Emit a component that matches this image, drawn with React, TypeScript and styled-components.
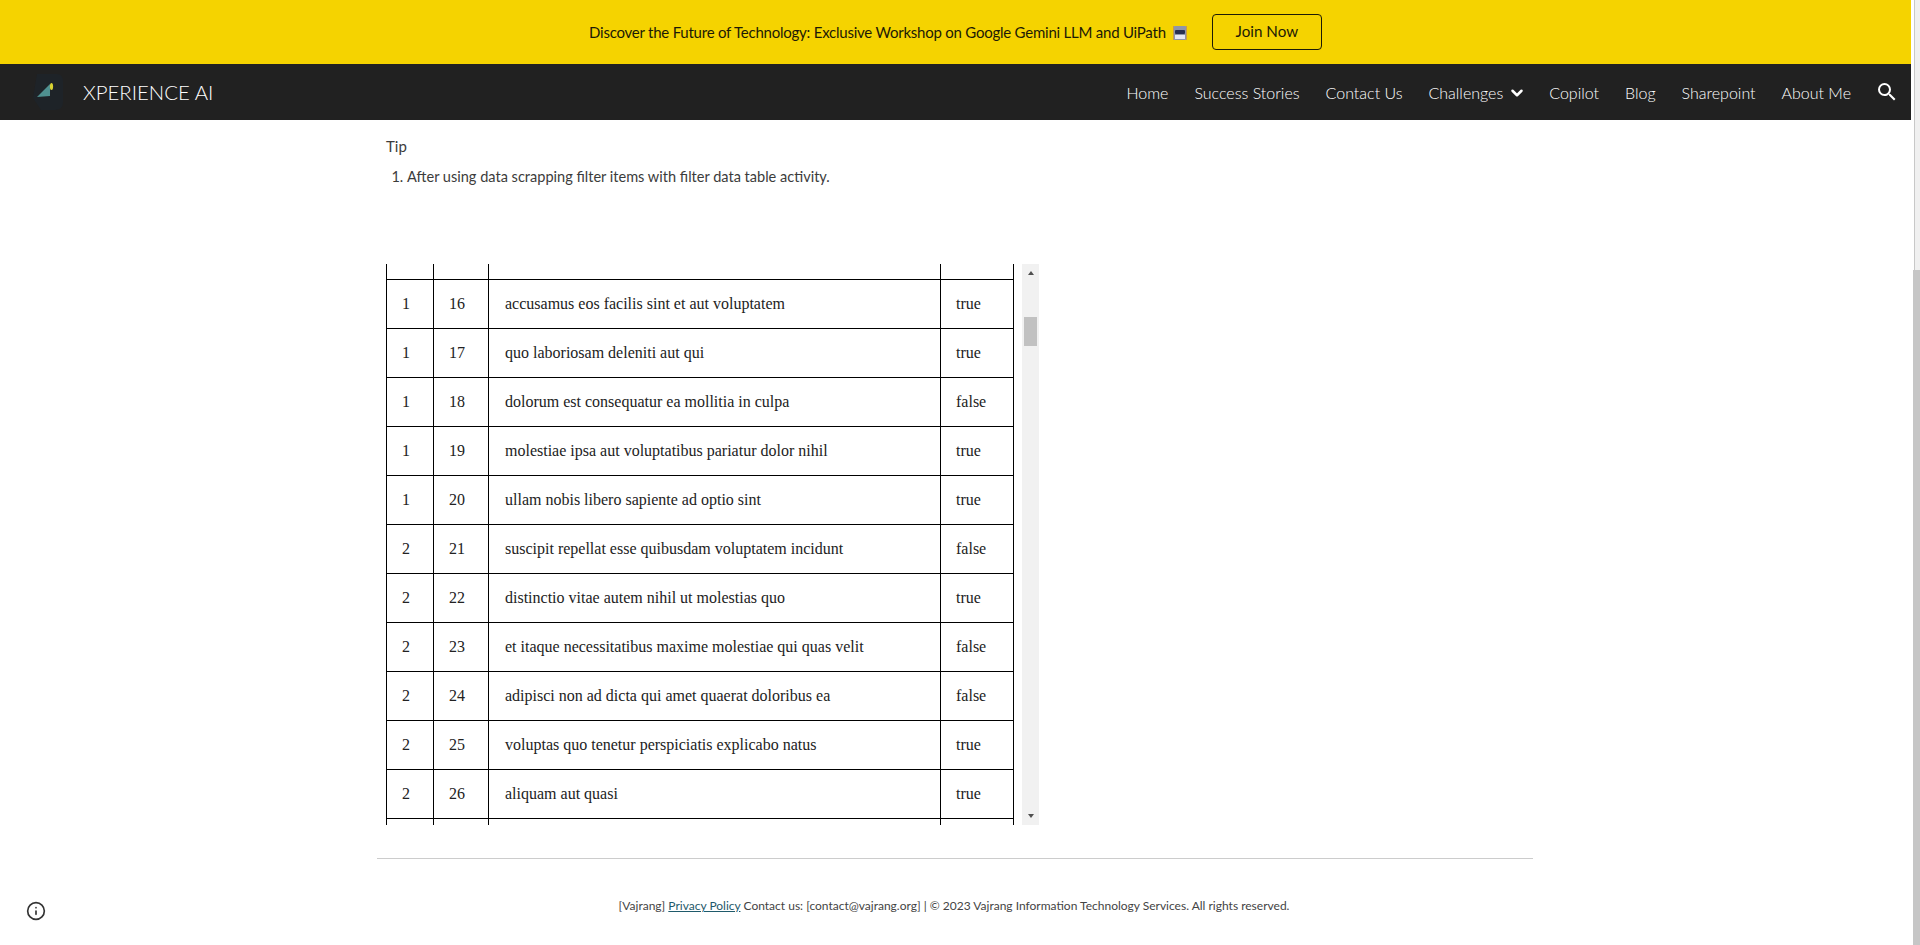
import styled, { createGlobalStyle } from "styled-components";
import { ChevronDown, Info } from "lucide-react";

interface ITodo {
  userId: number;
  id: number;
  title: string;
  completed: boolean;
}

const todos: ITodo[] = [
  { userId: 1, id: 16, title: "accusamus eos facilis sint et aut voluptatem", completed: true },
  { userId: 1, id: 17, title: "quo laboriosam deleniti aut qui", completed: true },
  { userId: 1, id: 18, title: "dolorum est consequatur ea mollitia in culpa", completed: false },
  { userId: 1, id: 19, title: "molestiae ipsa aut voluptatibus pariatur dolor nihil", completed: true },
  { userId: 1, id: 20, title: "ullam nobis libero sapiente ad optio sint", completed: true },
  { userId: 2, id: 21, title: "suscipit repellat esse quibusdam voluptatem incidunt", completed: false },
  { userId: 2, id: 22, title: "distinctio vitae autem nihil ut molestias quo", completed: true },
  { userId: 2, id: 23, title: "et itaque necessitatibus maxime molestiae qui quas velit", completed: false },
  { userId: 2, id: 24, title: "adipisci non ad dicta qui amet quaerat doloribus ea", completed: false },
  { userId: 2, id: 25, title: "voluptas quo tenetur perspiciatis explicabo natus", completed: true },
  { userId: 2, id: 26, title: "aliquam aut quasi", completed: true },
];

const navItems = ["Home", "Success Stories", "Contact Us", "Challenges", "Copilot", "Blog", "Sharepoint", "About Me"];

const GlobalStyle = createGlobalStyle`
  html, body {
    margin: 0;
    padding: 0;
    height: 100%;
    overflow: hidden;
    background: #fff;
    font-family: Lato, "Liberation Sans", sans-serif;
  }
`;

const Page = styled.div`
  display: flex;
  height: 945px;
`;

const Main = styled.div`
  width: 1911px;
  display: flex;
  flex-direction: column;
`;

const Banner = styled.div`
  height: 64px;
  background: #f5d300;
  display: flex;
  align-items: center;
  padding-left: 589px;
  color: #1c1a06;
  font-size: 15px;
`;

const BannerText = styled.span`
  letter-spacing: -0.23px;
`;

const Bot = styled.svg`
  width: 14px;
  height: 14px;
  margin: 1px 0 0 7px;
`;

const JoinButton = styled.button`
  width: 110px;
  height: 36px;
  margin-left: 25px;
  background: transparent;
  border: 1px solid #1c1a06;
  border-radius: 4px;
  color: #1c1a06;
  font: inherit;
  font-size: 15.2px;
  padding: 0 0 3px;
`;

const Nav = styled.nav`
  height: 56px;
  background: #212121;
  display: flex;
  align-items: center;
  padding: 0 12px 0 33px;
  color: #fff;
`;

const Logo = styled.svg`
  width: 30px;
  height: 38px;
`;

const Brand = styled.div`
  margin-left: 20px;
  font-size: 20.4px;
  font-weight: 300;
  flex: 1;
`;

const NavList = styled.div`
  display: flex;
  align-items: center;
  gap: 26px;
  font-size: 16px;
  font-weight: 300;
  color: #fff;
`;

const NavItem = styled.span`
  display: flex;
  align-items: center;
  gap: 5px;
`;

const Caret = styled(ChevronDown)`
  margin: 2px -3px 0 0;
`;

const SearchButton = styled.svg`
  width: 24px;
  height: 24px;
  margin-left: 24px;
  fill: #fff;
`;

const Content = styled.main`
  flex: 1;
  display: flex;
  flex-direction: column;
  padding: 16px 0 0 386px;
  color: #3c3c3c;
  font-size: 15px;
`;

const Tip = styled.p`
  margin: 0;
  line-height: 20px;
`;

const Steps = styled.ol`
  margin: 11px 0 0;
  padding: 0 0 0 21px;
  line-height: 20px;
  font-size: 14.55px;
`;

const TableFrame = styled.div`
  display: flex;
  width: 653px;
  height: 561px;
  margin-top: 77px;
  font-family: "Liberation Serif", "Times New Roman", serif;
  font-size: 16px;
  color: #222;
`;

const TableView = styled.div`
  width: 636px;
  overflow: hidden;
`;

const Table = styled.table`
  width: 627px;
  table-layout: fixed;
  border-collapse: collapse;
`;

const Col = styled.col<{ $w: number }>`
  width: ${(p) => p.$w}px;
`;

const Cell = styled.td`
  height: 48px;
  padding: 0 0 0 16px;
  border: 1px solid #000;
  white-space: nowrap;
`;

const TightCell = styled(Cell)`
  padding-left: 15px;
`;

const StubCell = styled.td<{ $h: number }>`
  height: ${(p) => p.$h}px;
  padding: 0;
  border-left: 1px solid #000;
  border-right: 1px solid #000;
`;

const Rail = styled.div`
  width: 17px;
  background: #f1f1f1;
  display: flex;
  flex-direction: column;
  align-items: center;
  justify-content: space-between;
  position: relative;
  padding: 7px 0;
  box-sizing: border-box;
`;

const Arrow = styled.span<{ $down?: boolean }>`
  width: 0;
  height: 0;
  border-left: 3px solid transparent;
  border-right: 3px solid transparent;
  ${(p) => (p.$down ? "border-top: 4px solid #505050;" : "border-bottom: 4px solid #505050;")}
`;

const Thumb = styled.div`
  position: absolute;
  top: 53px;
  left: 2px;
  width: 13px;
  height: 29px;
  background: #c1c1c1;
`;

const Divider = styled.hr`
  width: 1156px;
  margin: 33px 0 0 -9px;
  border: 0;
  border-top: 1px solid #ccc;
`;

const Footer = styled.footer`
  width: 1156px;
  margin: 39px 0 0 -10px;
  text-align: center;
  font-size: 12px;
  line-height: 16px;
  color: #444;
`;

const PolicyLink = styled.a`
  color: #1f5a6b;
  text-decoration: underline;
`;

const InfoBadge = styled.div`
  position: absolute;
  left: 26px;
  top: 901px;
  display: flex;
  color: #333;
`;

const PageScroll = styled.aside`
  width: 9px;
  position: relative;
  background: linear-gradient(to right, #fff 3px, #c8c8c8 3px, #c8c8c8 4px, #f0f0f0 4px);
`;

const PageThumb = styled.div`
  position: absolute;
  top: 270px;
  bottom: 0;
  left: 2px;
  right: 0;
  background: #c6c6c6;
`;

function App() {
  return (
    <>
      <GlobalStyle />
      <Page>
        <Main>
          <Banner>
            <BannerText>Discover the Future of Technology: Exclusive Workshop on Google Gemini LLM and UiPath</BannerText>
            <Bot viewBox="0 0 14 14">
              <rect x="0" y="0" width="14" height="14" rx="2" fill="#8f96a8" />
              <rect x="0" y="0" width="1" height="14" fill="#c99a4a" />
              <rect x="13" y="0" width="1" height="14" fill="#c99a4a" />
              <rect x="2" y="4" width="10" height="4" rx="1" fill="#2a3050" />
              <rect x="2" y="9" width="10" height="4" fill="#e8e8f0" />
            </Bot>
            <JoinButton>Join Now</JoinButton>
          </Banner>
          <Nav>
            <Logo viewBox="0 0 30 38">
              <path d="M4 1 H24 Q30 1 30 9 V29 Q30 37 22 37 H8 L0 25 Z" fill="#1e2328" />
              <path d="M4 24 L17 11 L17 23 Z" fill="#4f9090" />
              <ellipse cx="18.5" cy="13.5" rx="1.6" ry="3.6" fill="#d8d232" />
            </Logo>
            <Brand>XPERIENCE AI</Brand>
            <NavList>
              {navItems.map((item) => (
                <NavItem key={item}>
                  {item}
                  {item === "Challenges" && <Caret size={18} strokeWidth={3.4} />}
                </NavItem>
              ))}
            </NavList>
            <SearchButton viewBox="0 0 24 24">
              <path d="M15.5 14h-.79l-.28-.27A6.471 6.471 0 0 0 16 9.5 6.5 6.5 0 1 0 9.5 16c1.61 0 3.09-.59 4.23-1.57l.27.28v.79l5 4.99L20.49 19l-4.99-5zm-6 0C7.01 14 5 11.99 5 9.5S7.01 5 9.5 5 14 7.01 14 9.5 11.99 14 9.5 14z" />
            </SearchButton>
          </Nav>
          <Content>
            <Tip>Tip</Tip>
            <Steps>
              <li>After using data scrapping filter items with filter data table activity.</li>
            </Steps>
            <TableFrame>
              <TableView>
                <Table>
                  <colgroup>
                    <Col $w={47} />
                    <Col $w={55} />
                    <Col $w={452} />
                    <Col $w={73} />
                  </colgroup>
                  <tbody>
                    <tr>
                      <StubCell $h={15} />
                      <StubCell $h={15} />
                      <StubCell $h={15} />
                      <StubCell $h={15} />
                    </tr>
                    {todos.map((todo) => (
                      <tr key={todo.id}>
                        <TightCell>{todo.userId}</TightCell>
                        <TightCell>{todo.id}</TightCell>
                        <Cell>{todo.title}</Cell>
                        <TightCell>{String(todo.completed)}</TightCell>
                      </tr>
                    ))}
                    <tr>
                      <StubCell $h={6} />
                      <StubCell $h={6} />
                      <StubCell $h={6} />
                      <StubCell $h={6} />
                    </tr>
                  </tbody>
                </Table>
              </TableView>
              <Rail>
                <Arrow />
                <Thumb />
                <Arrow $down />
              </Rail>
            </TableFrame>
            <Divider />
            <Footer>
              [Vajrang] <PolicyLink>Privacy Policy</PolicyLink> Contact us: [contact@vajrang.org] | © 2023 Vajrang Information Technology Services. All rights reserved.
            </Footer>
          </Content>
        </Main>
        <PageScroll>
          <PageThumb />
        </PageScroll>
        <InfoBadge>
          <Info size={20} strokeWidth={2} />
        </InfoBadge>
      </Page>
    </>
  );
}

export default App;
